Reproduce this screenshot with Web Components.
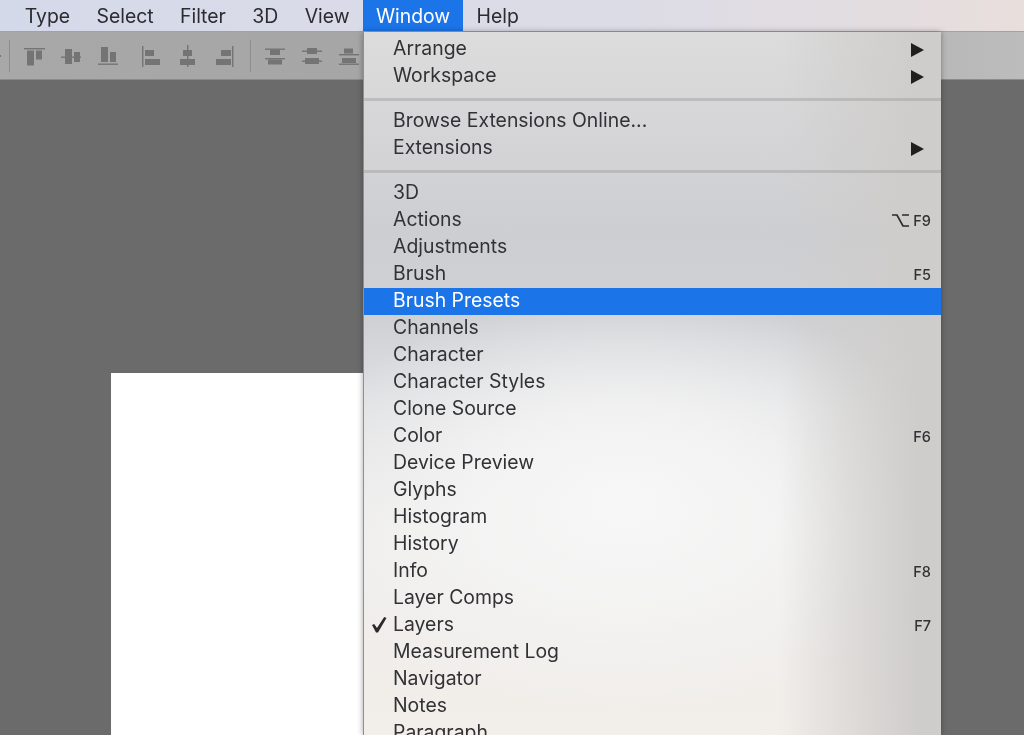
<!DOCTYPE html>
<html><head><meta charset="utf-8"><style>
html,body{margin:0;height:100%;overflow:hidden;background:#6b6b6b}
</style></head><body>
<ps-app></ps-app>
<script>
const FONT='Inter,Roboto,"Liberation Sans",sans-serif';
const FS='19.4px';
class PsMenubar extends HTMLElement{constructor(){super();this.attachShadow({mode:'open'}).innerHTML=`<style>
:host{display:flex;height:31px;border-bottom:1px solid #a2a2a2;background:linear-gradient(90deg,#d4d9e9 0,#d9dbe8 30%,#dcdce6 60%,#e3dde0 85%,#e8dedc 100%);font:${FS}/32px ${FONT};color:#2b2b30;padding-left:11.5px;align-items:stretch}
span{padding:0 13.2px;display:block}
span.on{background:#1b74e8;color:#fff}
</style><span>Type</span><span>Select</span><span>Filter</span><span>3D</span><span>View</span><span class="on">Window</span><span>Help</span>`}}
customElements.define('ps-menubar',PsMenubar);
class PsToolbar extends HTMLElement{constructor(){super();this.attachShadow({mode:'open'}).innerHTML=`<style>
:host{display:flex;height:47px;background:linear-gradient(90deg,#a8a8a8 0,#a6a6a6 35%,#b8b8b8 92%,#bcbcbc 100%);border-bottom:1px solid #8b8b8b;align-items:center;overflow:hidden}
svg{display:block;flex:none}
.sep{width:1px;height:32px;background:#8e8e8e;flex:none}
</style>
<svg width="9" height="26"><rect x="-2" y="12" width="3" height="2" fill="#747474"/></svg><i class="sep"></i>
<svg width="240" height="26" viewBox="0 0 240 26" fill="#747474">
<g transform="translate(-10,-42)">
<rect x="24" y="47" width="21" height="1.4"/><rect x="27" y="49.5" width="7" height="15"/><rect x="36" y="49.5" width="6" height="9"/>
<rect x="61" y="55.5" width="20" height="1.4"/><rect x="65" y="48" width="7" height="15"/><rect x="74" y="51" width="6" height="10"/>
<rect x="98" y="62.5" width="20" height="1.4"/><rect x="101" y="46" width="7" height="15"/><rect x="110" y="51" width="6" height="10"/>
<rect x="142" y="45" width="1.4" height="21"/><rect x="145" y="49" width="9" height="6"/><rect x="145" y="58" width="15" height="6"/>
<rect x="187" y="44" width="1.4" height="22"/><rect x="183" y="49" width="9" height="6"/><rect x="180" y="58" width="15" height="6"/>
<rect x="232" y="45" width="1.4" height="21"/><rect x="221" y="49" width="10" height="6"/><rect x="216" y="58" width="15" height="6"/>
</g></svg>
<i class="sep"></i>
<svg width="113" height="26" viewBox="0 0 113 26" fill="#747474">
<g transform="translate(-251,-42)">
<rect x="265" y="47.5" width="20" height="1.4"/><rect x="270" y="49" width="10" height="5"/><rect x="265" y="57" width="20" height="1.4"/><rect x="268" y="58.5" width="14" height="5"/>
<rect x="302" y="49.5" width="20" height="1.4"/><rect x="307" y="47" width="10" height="6"/><rect x="302" y="59.5" width="20" height="1.4"/><rect x="305" y="57" width="14" height="6"/>
<rect x="339" y="53" width="20" height="1.4"/><rect x="344" y="47.5" width="9" height="5"/><rect x="339" y="62.5" width="20" height="1.4"/><rect x="342" y="57" width="14" height="5"/>
</g></svg>`}}
customElements.define('ps-toolbar',PsToolbar);
class PsRow extends HTMLElement{
constructor(){super();this.attachShadow({mode:'open'})}
connectedCallback(){const k=this.getAttribute('key'),sub=this.hasAttribute('sub'),chk=this.hasAttribute('checked'),opt=this.hasAttribute('opt');
this.shadowRoot.innerHTML=`<style>
:host{display:flex;height:27px;align-items:center;box-sizing:border-box;padding:0 10px 0 29px;position:relative;font:${FS}/24px ${FONT};color:#323236}
:host([active]){background:#1b74e8;color:#fff}
.t{flex:1;position:relative;top:-1.5px}
.k{font:500 14.5px/20px ${FONT};display:flex;align-items:center;gap:4px}
.chk{position:absolute;left:8px;top:5px}
.arr{position:absolute;left:547px;top:7px}
</style>${chk?'<svg class="chk" width="15" height="16" viewBox="0 0 15 16"><path d="M0 8L2.2 7 5 11 12.2 0 14.5 1 6 15.5H4z" fill="#2a2a2a"/></svg>':''}<span class="t"><slot></slot></span>${sub?'<svg class="arr" width="13" height="14" viewBox="0 0 13 14"><path d="M0 0L13 7 0 14z" fill="#1f1f1f"/></svg>':''}${k?`<span class="k">${opt?'<svg width="17" height="15" viewBox="0 0 17 15" fill="none" stroke="#2a2a2a" stroke-width="1.7"><path d="M0 2H5L11 13H17M10 2H17"/></svg>':''}${k}</span>`:''}`}}
customElements.define('ps-row',PsRow);
class PsSep extends HTMLElement{constructor(){super();this.attachShadow({mode:'open'}).innerHTML=`<style>:host{display:block;height:18px;position:relative}i{position:absolute;left:0;right:0;top:8px;height:2.5px;background:rgba(150,150,150,.4)}</style><i></i>`}}
customElements.define('ps-sep',PsSep);
class PsMenu extends HTMLElement{constructor(){super();this.attachShadow({mode:'open'}).innerHTML=`<style>
:host{display:block;position:absolute;left:363px;top:32px;width:578px;height:703px;overflow:hidden;box-sizing:border-box;padding-top:4px;border-left:1px solid #8f8f8f;box-shadow:0 0 6px rgba(0,0,0,.35);
background:
 linear-gradient(90deg,rgba(207,205,203,0) 72%,rgba(207,205,203,.55) 84%,rgba(207,205,203,1) 96%),
 radial-gradient(ellipse 340px 210px at 260px 470px,rgba(247,247,247,1) 0,rgba(245,245,245,.8) 45%,rgba(240,240,240,0) 100%),
 linear-gradient(180deg,#dcdcdc 0,#d6d6d8 90px,#cdced2 200px,#d0d1d5 290px,#e0e1e3 375px,#eeedeb 500px,#f2eeea 700px)}
</style><slot></slot>`}}
customElements.define('ps-menu',PsMenu);
class PsApp extends HTMLElement{constructor(){super();this.attachShadow({mode:'open'}).innerHTML=`<style>
:host{display:flex;flex-direction:column;height:735px;width:1024px;position:relative;overflow:hidden;background:#6b6b6b;filter:blur(.35px)}
.work{flex:1;padding:293px 0 0 111px;min-height:0}
.doc{background:#fff;height:100%;width:400px}
</style><ps-menubar></ps-menubar><ps-toolbar></ps-toolbar><div class="work"><div class="doc"></div></div>
<ps-menu>
<ps-row sub>Arrange</ps-row><ps-row sub>Workspace</ps-row><ps-sep></ps-sep>
<ps-row>Browse Extensions Online...</ps-row><ps-row sub>Extensions</ps-row><ps-sep></ps-sep>
<ps-row>3D</ps-row><ps-row key="F9" opt>Actions</ps-row><ps-row>Adjustments</ps-row><ps-row key="F5">Brush</ps-row><ps-row active>Brush Presets</ps-row><ps-row>Channels</ps-row><ps-row>Character</ps-row><ps-row>Character Styles</ps-row><ps-row>Clone Source</ps-row><ps-row key="F6">Color</ps-row><ps-row>Device Preview</ps-row><ps-row>Glyphs</ps-row><ps-row>Histogram</ps-row><ps-row>History</ps-row><ps-row key="F8">Info</ps-row><ps-row>Layer Comps</ps-row><ps-row key="F7" checked>Layers</ps-row><ps-row>Measurement Log</ps-row><ps-row>Navigator</ps-row><ps-row>Notes</ps-row><ps-row>Paragraph</ps-row>
</ps-menu>`}}
customElements.define('ps-app',PsApp);
</script></body></html>
